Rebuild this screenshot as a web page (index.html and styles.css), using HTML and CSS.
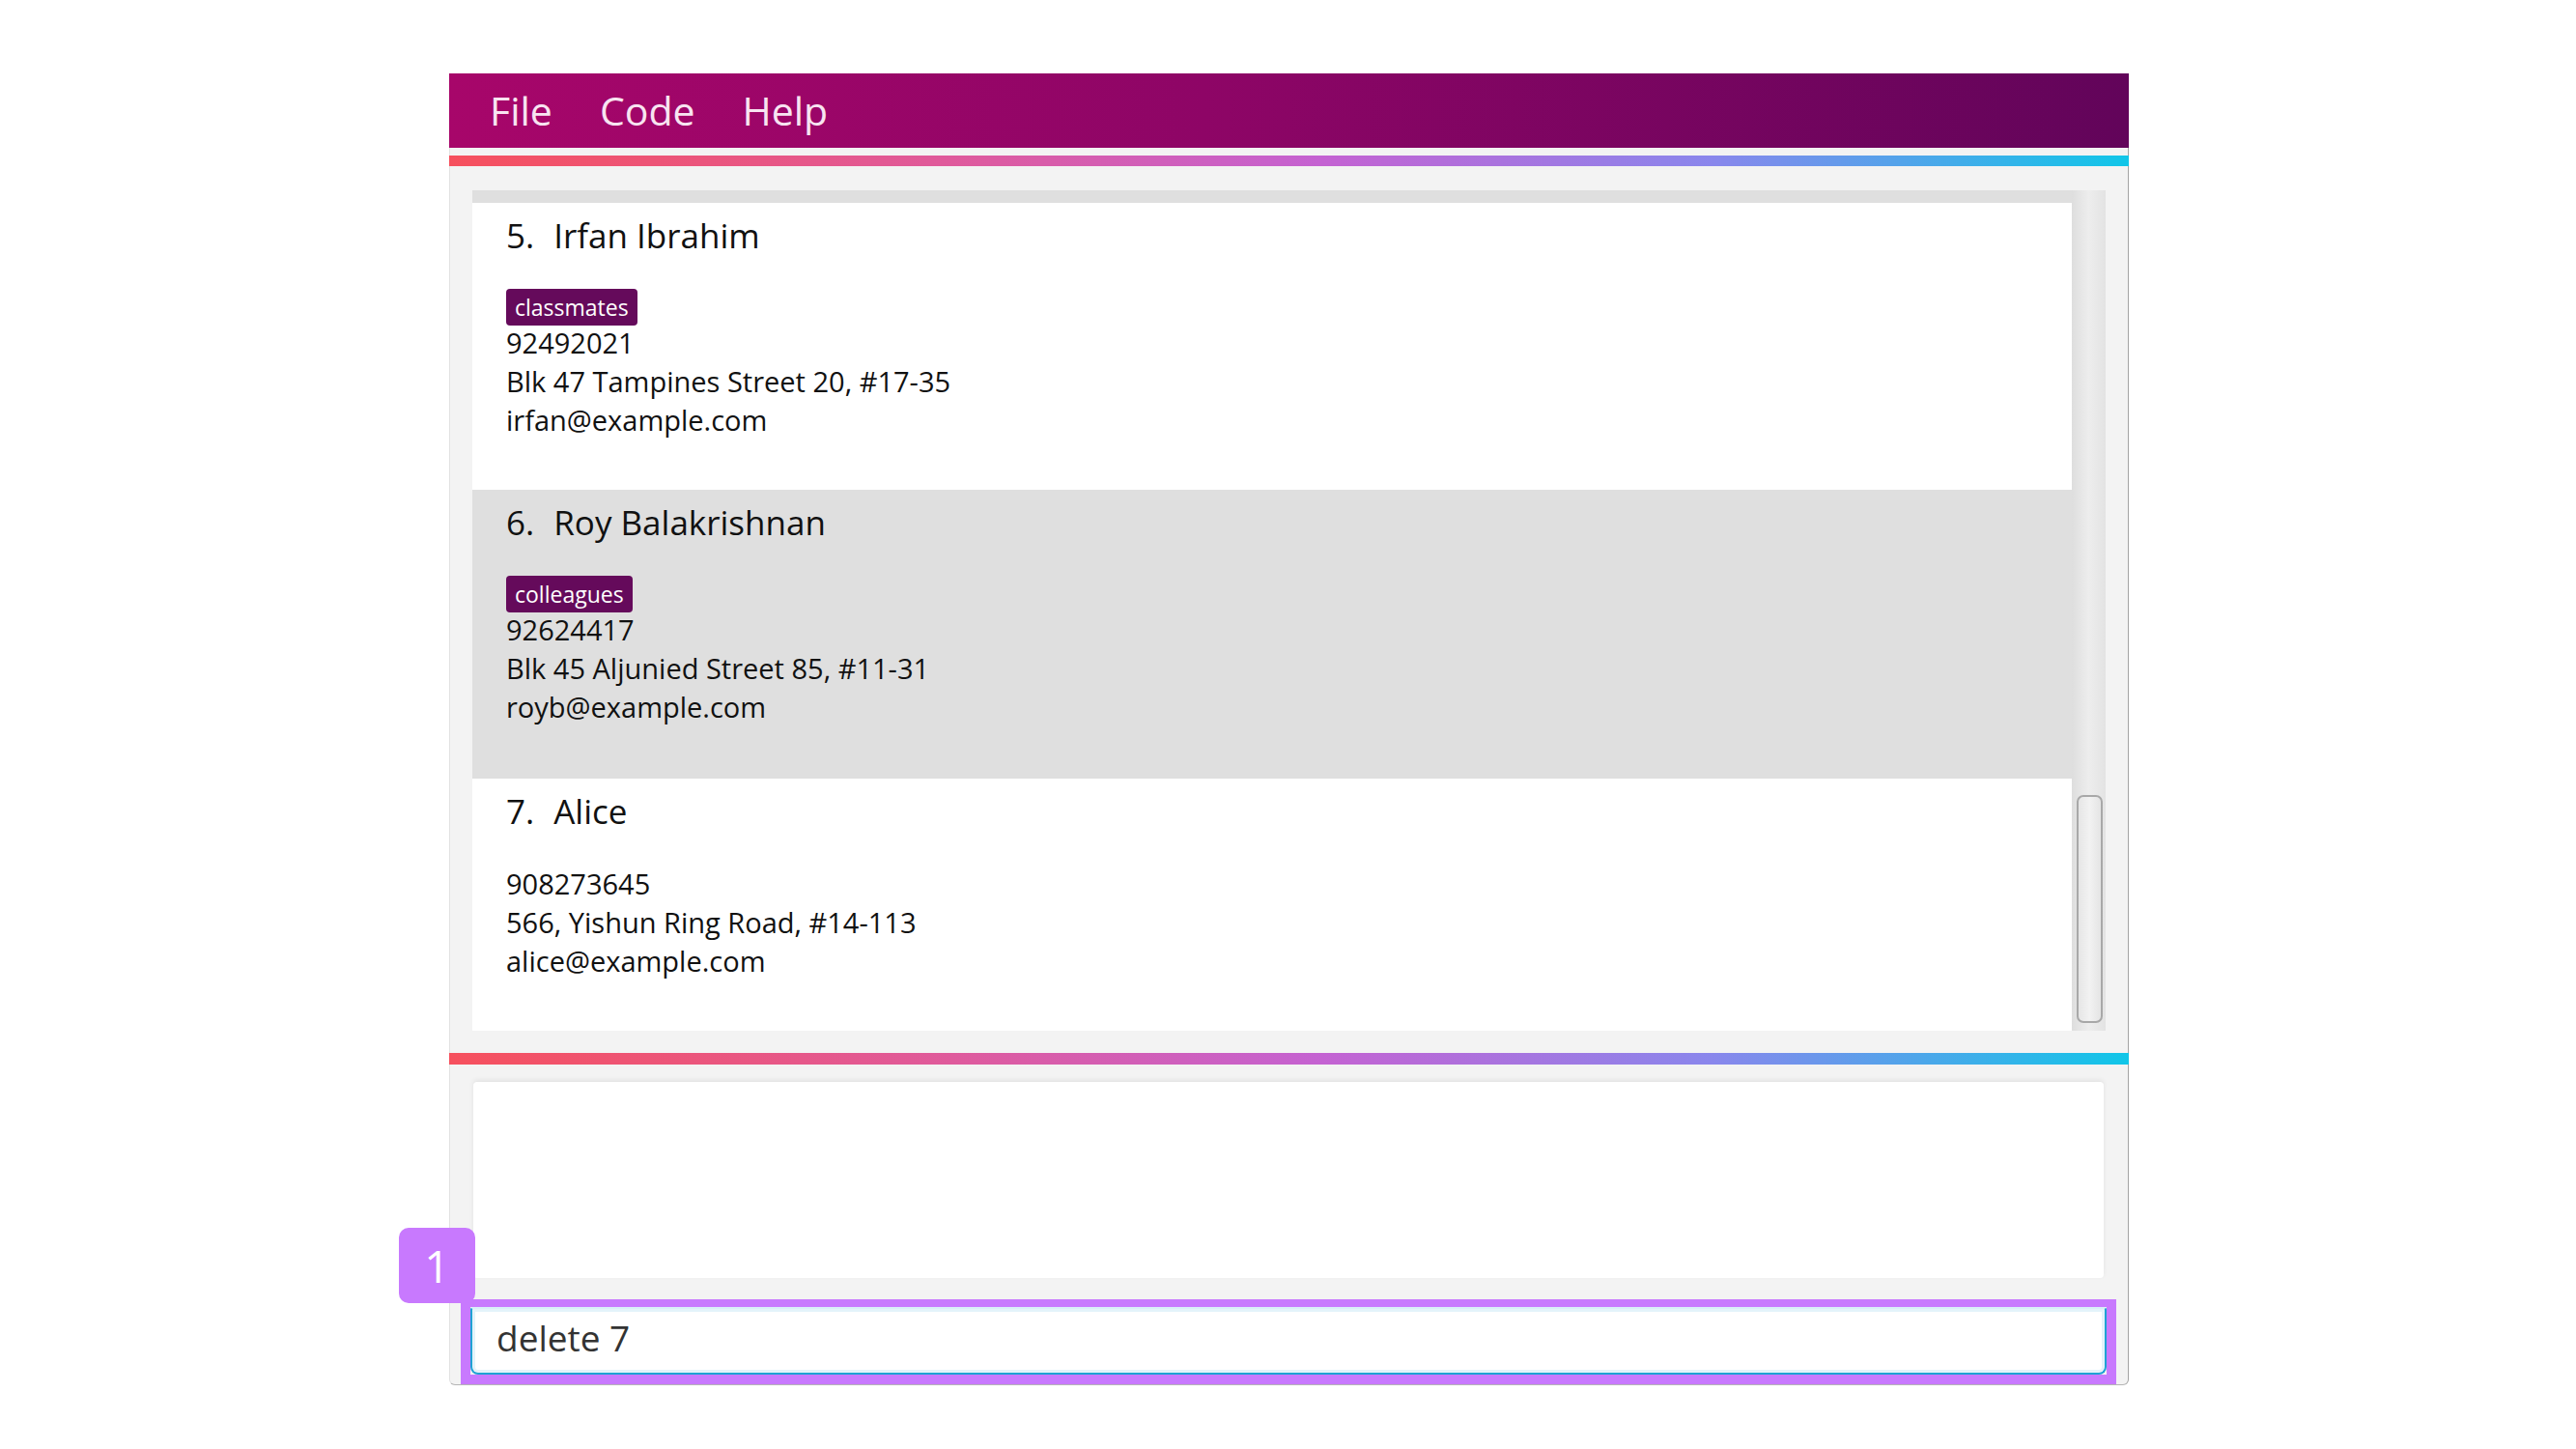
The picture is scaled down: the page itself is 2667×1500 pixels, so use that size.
FILE: index.html
```html
<!DOCTYPE html>
<html>
<head>
<meta charset="utf-8">
<link rel="stylesheet" href="styles.css">
</head>
<body>
<div class="window">
  <div class="menubar">
    <span class="menu-item">File</span>
    <span class="menu-item">Code</span>
    <span class="menu-item">Help</span>
  </div>
  <div class="gap-top"></div>
  <div class="rainbow"></div>
  <div class="list-panel">
    <div class="list">
      <div class="card-tail"></div>
      <div class="card">
        <div class="card-head"><span class="card-id">5.</span><span class="card-name">Irfan Ibrahim</span></div>
        <div class="tags"><span class="tag">classmates</span></div>
        <div class="field">92492021</div>
        <div class="field">Blk 47 Tampines Street 20, #17-35</div>
        <div class="field">irfan@example.com</div>
      </div>
      <div class="card card-alt">
        <div class="card-head"><span class="card-id">6.</span><span class="card-name">Roy Balakrishnan</span></div>
        <div class="tags"><span class="tag">colleagues</span></div>
        <div class="field">92624417</div>
        <div class="field">Blk 45 Aljunied Street 85, #11-31</div>
        <div class="field">royb@example.com</div>
      </div>
      <div class="card">
        <div class="card-head"><span class="card-id">7.</span><span class="card-name">Alice</span></div>
        <div class="tags"></div>
        <div class="field">908273645</div>
        <div class="field">566, Yishun Ring Road, #14-113</div>
        <div class="field">alice@example.com</div>
      </div>
    </div>
    <div class="scrollbar">
      <div class="thumb"></div>
    </div>
  </div>
  <div class="rainbow rainbow-bottom"></div>
  <div class="result-box"></div>
  <div class="command-highlight">
    <span class="badge">1</span>
    <div class="command-input">delete 7</div>
  </div>
</div>
</body>
</html>
```
FILE: styles.css
```css
* { box-sizing: border-box; }
html, body { margin: 0; padding: 0; background: #ffffff; }
body {
  font-family: "Open Sans", "Noto Sans", sans-serif;
  padding-top: 76px;
  padding-left: 465px;
  height: 1500px;
  overflow: hidden;
}
.window {
  width: 1739px;
  height: 1358px;
  background: #f3f3f3;
  border-right: 1px solid #a3a3a3;
  border-bottom: 1px solid #b5b5b5;
  border-left: 1px solid #e2e2e2;
  border-radius: 0 0 6px 6px;
  display: flex;
  flex-direction: column;
  position: relative;
}
.menubar {
  height: 77px;
  flex: none;
  background: linear-gradient(to right, #a7066a 0%, #8e0566 45%, #62045a 100%);
  display: flex;
  align-items: center;
  padding-left: 42px;
  gap: 49px;
  margin-left: -1px;
  margin-right: -1px;
}
.menu-item {
  color: #f8e4f1;
  font-size: 41px;
  line-height: 1;
}
.gap-top { height: 8px; flex: none; }
.rainbow {
  height: 11px;
  flex: none;
  background: linear-gradient(to right, #f6505d 0%, #df5a9c 30%, #c462d2 52%, #8a86ec 75%, #10c6e8 100%);
  margin-left: -1px;
  margin-right: -1px;
}
.list-panel {
  margin: 25px 23px 0 23px;
  height: 870px;
  flex: none;
  display: flex;
  background: #ffffff;
}
.list {
  flex: 1;
  overflow: hidden;
  display: flex;
  flex-direction: column;
}
.card-tail { height: 13px; background: #dfdfdf; flex: none; }
.card {
  background: #ffffff;
  padding: 11px 0 52px 35px;
  flex: none;
}
.card-alt { background: #dfdfdf; padding-bottom: 54px; }
.card-head {
  display: flex;
  gap: 20px;
  font-size: 35px;
  line-height: 46px;
  color: #111111;
}
.tags {
  margin-top: 32px;
  display: flex;
}
.tag {
  background: #650a5b;
  color: #ffffff;
  font-size: 23px;
  line-height: 38px;
  height: 38px;
  padding: 0 9px;
  border-radius: 4px;
  margin-bottom: -2px;
}
.field {
  font-size: 29px;
  line-height: 40px;
  color: #111111;
}
.scrollbar {
  width: 35px;
  flex: none;
  background: linear-gradient(to right, #dedede 0%, #ededed 50%, #e3e3e3 100%);
  position: relative;
}
.thumb {
  position: absolute;
  left: 5px;
  right: 3px;
  top: 626px;
  height: 236px;
  border: 2px solid #a8a8a8;
  border-radius: 7px;
  background: linear-gradient(to right, #e6e6e6, #f2f2f2 50%, #e4e4e4);
}
.rainbow-bottom { margin-top: 23px; height: 12px; }
.result-box {
  margin: 18px 25px 0 24px;
  height: 203px;
  flex: none;
  background: #ffffff;
  border-radius: 4px;
  box-shadow: 0 -2px 5px rgba(0, 0, 0, 0.07);
}
.command-highlight {
  margin: 22px 12px 0 11px;
  flex: 1;
  border: solid #c879fe;
  border-width: 8px 10px 10px 10px;
  position: relative;
}
.badge {
  position: absolute;
  left: -74px;
  top: -82px;
  width: 79px;
  height: 78px;
  background: #c879fe;
  color: #ffffff;
  border-radius: 10px;
  font-size: 46px;
  line-height: 78px;
  text-align: center;
}
.command-input {
  height: 70px;
  background: #ffffff;
  border: 2px solid #1ea2d4;
  border-top-color: #d9eff8;
  border-radius: 3px 3px 8px 8px;
  box-shadow: inset 0 0 0 3px #e3f3fa;
  padding-left: 25px;
  font-size: 37px;
  line-height: 60px;
  color: #333333;
}
```
